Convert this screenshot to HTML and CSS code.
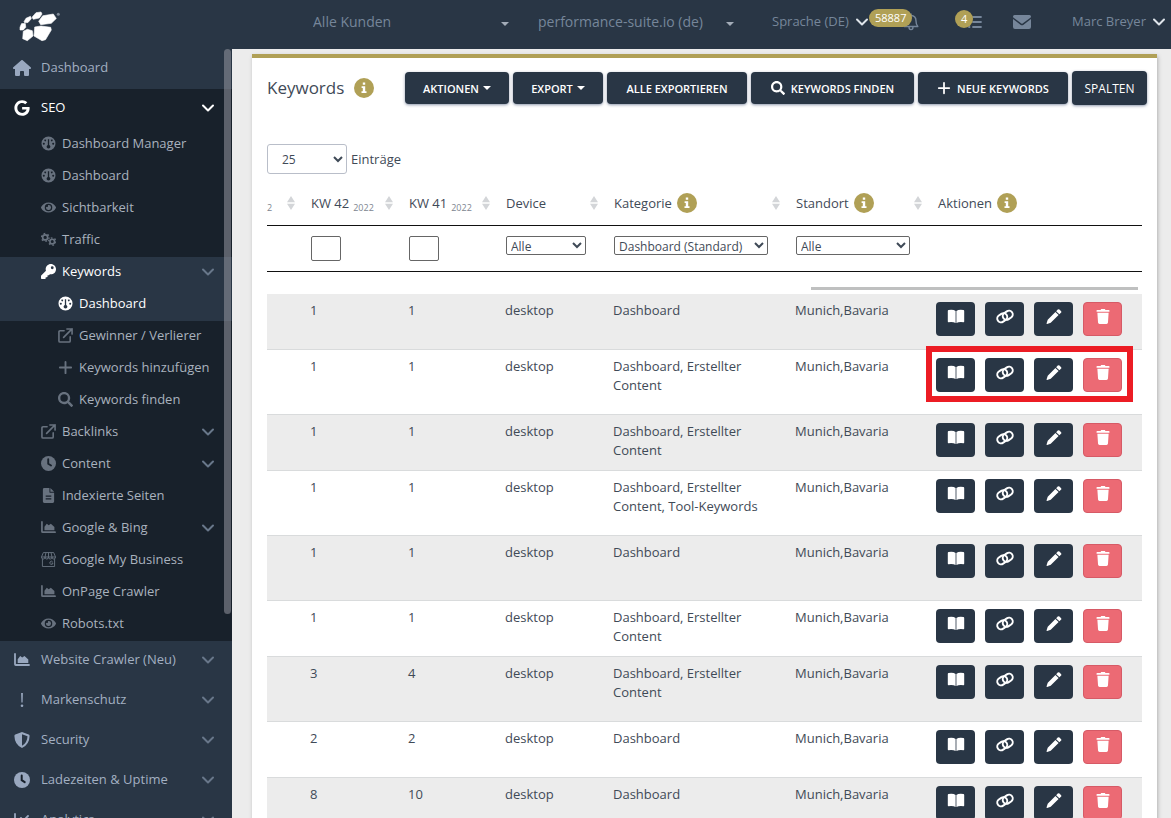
FILE: index.html
```html
<!DOCTYPE html>
<html lang="de">
<head>
<meta charset="utf-8">
<title>Keywords</title>
<meta name="viewport" content="width=device-width, initial-scale=1">
<link rel="stylesheet" href="styles.css">
</head>
<body>
<svg class="sprite" aria-hidden="true">
  <symbol id="home" viewBox="0 0 576 512"><path d="M575.8 255.5c0 18-15 32.1-32 32.1h-32l.7 160.2c0 2.7-.2 5.4-.5 8.1V472c0 22.1-17.9 40-40 40H392c-22.1 0-40-17.9-40-40V384c0-17.7-14.3-32-32-32H256c-17.7 0-32 14.3-32 32v88c0 22.1-17.9 40-40 40H104c-22.1 0-40-17.9-40-40V287.600H32c-18 0-32-14-32-32.100c0-9 3-17 10-24L266.400 8c7-7 15-8 22-8s15 2 21 7L564.800 231.500c8 7 12 15 11 24z"/></symbol>
  <symbol id="google" viewBox="0 0 488 512"><path d="M488 261.8C488 403.3 391.1 504 248 504 110.8 504 0 393.2 0 256S110.800 8 248 8c66.800 0 123 24.500 166.300 64.900l-67.500 64.900C258.500 52.600 94.300 116.600 94.300 256c0 86.500 69.100 156.600 153.700 156.600 98.200 0 135-70.400 140.800-106.900H248v-85.300h236.100c2.300 12.700 3.900 24.900 3.900 41.400z"/></symbol>
  <symbol id="gauge" viewBox="0 0 16 16"><path fill-rule="evenodd" d="M8 0.500a7.500 7.500 0 1 1 0 15a7.500 7.500 0 0 1 0-15zM7.300 3.500v6a2 2 0 1 0 1.400 0v-6zM4.500 3.600a1 1 0 1 0 .01 0zM11.500 3.600a1 1 0 1 0 .01 0zM3 7.200a1 1 0 1 0 .01 0zM13 7.200a1 1 0 1 0 .01 0z"/></symbol>
  <symbol id="eye" viewBox="0 0 576 512"><path d="M572.520 241.400C518.290 135.590 410.930 64 288 64S57.680 135.640 3.480 241.410a32.350 32.350 0 0 0 0 29.190C57.710 376.410 165.070 448 288 448s230.320-71.640 284.520-177.410a32.350 32.350 0 0 0 0-29.190zM288 400a144 144 0 1 1 144-144 143.930 143.930 0 0 1-144 144zm0-240a95.310 95.310 0 0 0-25.310 3.790 47.850 47.850 0 0 1-66.900 66.900A95.780 95.780 0 1 0 288 160z"/></symbol>
  <symbol id="gears" viewBox="1 1 18 14"><g fill="none" stroke="currentColor"><circle cx="6" cy="5.500" r="3" stroke-width="2"/><circle cx="6" cy="5.500" r="4.700" stroke-width="1.600" stroke-dasharray="2 2.920"/><circle cx="14.500" cy="10.500" r="2.800" stroke-width="2"/><circle cx="14.500" cy="10.500" r="4.400" stroke-width="1.600" stroke-dasharray="2 2.600"/></g></symbol>
  <symbol id="key" viewBox="0 0 512 512"><path d="M512 176C512 273.200 433.200 352 336 352c-11.200 0-22.200-1-32.800-3l-24 27A24 24 0 0 1 261.200 384H224v40c0 13.300-10.700 24-24 24h-40v40c0 13.300-10.700 24-24 24H24c-13.300 0-24-10.700-24-24v-78a24 24 0 0 1 7-17l161.800-161.800C163 213.800 160 195.300 160 176 160 78.800 238.800 0 336 0c97.500 0 176 78.500 176 176zM336 128a48 48 0 1 0 96 0 48 48 0 1 0-96 0z"/></symbol>
  <symbol id="external" viewBox="0 0 16 16"><path fill="none" stroke="currentColor" stroke-width="1.700" stroke-linecap="round" stroke-linejoin="round" d="M6.500 3H2.200Q1 3 1 4.200v9.600Q1 15 2.200 15h9.600Q13 15 13 13.800V9.500M9.500 1H15v5.500M15 1L6 10"/></symbol>
  <symbol id="plus" viewBox="0 0 16 16"><path fill="none" stroke="currentColor" stroke-width="2" stroke-linecap="round" d="M8 2v12M2 8h12"/></symbol>
  <symbol id="search" viewBox="0 0 512 512"><path d="M505 442.700L405.300 343c-4.500-4.500-10.600-7-17-7H372c27.600-35.300 44-79.700 44-128C416 93.100 322.900 0 208 0S0 93.100 0 208s93.100 208 208 208c48.300 0 92.700-16.400 128-44v16.300c0 6.400 2.500 12.500 7 17l99.700 99.700c9.400 9.400 24.600 9.400 33.900 0l28.300-28.300c9.400-9.400 9.400-24.600.1-34zM208 336a128 128 0 1 1 0-256 128 128 0 0 1 0 256z"/></symbol>
  <symbol id="clock" viewBox="0 0 16 16"><circle cx="8" cy="8" r="8"/><path class="cut" d="M7.700 3.500v4.700l3 2"/></symbol>
  <symbol id="file" viewBox="0 0 16 16"><path fill-rule="evenodd" d="M3.500 0H9v4.500q0 .5.500.5H14v9.500q0 1.500-1.500 1.500h-9Q2 16 2 14.500v-13Q2 0 3.500 0zM10 0l4 4h-4zM5 8v1.200h6V8zM5 11v1.200h6V11z"/></symbol>
  <symbol id="area" viewBox="0 0 16 16"><path fill="none" stroke="currentColor" stroke-width="1.800" stroke-linecap="round" stroke-linejoin="round" d="M1 2v10.200q0 .8.800.8H15"/><path d="M3.700 11V7.200L6.200 4l2 1.600L10.500 4l3.800 3.500V11z"/></symbol>
  <symbol id="line" viewBox="0 0 16 16"><path fill="none" stroke="currentColor" stroke-width="1.800" stroke-linecap="round" stroke-linejoin="round" d="M1 2v10.200q0 .8.800.8H15M4 9l3-3 2.500 2.500L14 4"/></symbol>
  <symbol id="store" viewBox="0 0 16 16"><g fill="none" stroke="currentColor"><path d="M2.500.6h11l2 4.700H.5zM5.300.6L4.300 5.300M8 .6v4.700M10.700.6l1 4.700M.5 5.300q0 2.200 1.900 2.200t1.900-2.200q0 2.200 1.850 2.200T8 5.300q0 2.200 1.850 2.200t1.850-2.200q0 2.200 1.900 2.200t1.900-2.200M1.500 7.500v8h13v-8"/><path d="M12.300 10.300a1.700 1.700 0 1 0 .5 1.500h-1.500"/></g></symbol>
  <symbol id="bang" viewBox="0 0 16 16"><path d="M7.100 1h1.800l-.3 9.500H7.400z"/><circle cx="8" cy="13.800" r="1.300"/></symbol>
  <symbol id="shield" viewBox="0 0 16 16"><path fill-rule="evenodd" d="M8 0l6.700 2.600q.9.400.9 1.300Q15.400 12.400 8 16Q.6 12.400.4 3.900.4 3 1.300 2.600zM8 2.200v11.600q5.300-2.900 5.500-9.500z"/></symbol>
  <symbol id="chevron" viewBox="0 0 16 16"><path fill="none" stroke="currentColor" stroke-width="2" stroke-linecap="round" stroke-linejoin="round" d="M3 5.500l5 5 5-5"/></symbol>
  <symbol id="caret" viewBox="0 0 8 4"><path d="M0 0h8L4 4z"/></symbol>
  <symbol id="bell" viewBox="0 0 16 18"><path fill="none" stroke="currentColor" stroke-width="1.400" stroke-linecap="round" stroke-linejoin="round" d="M8 1v1.500M1.200 13.500q1.800-2 1.800-5.500 0-5.300 5-5.500 5 .2 5 5.500 0 3.500 1.800 5.500zM6 14q0 2.600 2 2.600t2-2.600"/></symbol>
  <symbol id="tasks" viewBox="0 0 16 16"><path fill="none" stroke="currentColor" stroke-width="1.800" stroke-linecap="round" d="M7 3h8M7 8h8M3 13h.5M7 13h8M1 3l1 1 2-2M1 8l1 1 2-2"/></symbol>
  <symbol id="mail" viewBox="0 0 18 14"><path d="M1.500 0h15Q18 0 18 1.500q0 .7-.6 1.200L9.600 8.600q-.6.400-1.200 0L.6 2.700Q0 2.200 0 1.500 0 0 1.500 0zM0 4l7.800 5.900q1.200.8 2.400 0L18 4v8q0 2-2 2H2q-2 0-2-2z"/></symbol>
  <symbol id="info" viewBox="0 0 20 20"><circle cx="10" cy="10" r="10"/><path fill="#fff" d="M8.800 4.600h2.400v2.200H8.800zM7.600 8.200h3.600v5h1.300v1.700h-5v-1.700h1.300V9.900H7.600z"/></symbol>
  <symbol id="sort" viewBox="0 0 8 14"><path d="M4 0l4 6.300H0zM0 7.700h8L4 14z"/></symbol>
  <symbol id="book" viewBox="0 0 18 15"><path d="M8.600 2v12Q6 12.600 1.600 13.200q-.8.100-.8-.7V2q0-.9.800-1Q6.500.3 8.600 2zM9.400 2v12q2.600-1.400 7-.8.800.1.800-.7V2q0-.9-.8-1-4.900-.7-7 1z"/></symbol>
  <symbol id="link" viewBox="0 0 18 15"><g fill="none" stroke="currentColor" stroke-width="2"><rect x="1" y="5" width="10.500" height="7.500" rx="3.750" transform="rotate(-35 6.250 8.750)"/><rect x="6.500" y="2.500" width="10.500" height="7.500" rx="3.750" transform="rotate(-35 11.750 6.250)"/></g></symbol>
  <symbol id="pencil" viewBox="0 0 16 16"><path d="M10.300 2.300l1.700-1.700q.9-.9 1.800 0l1.600 1.600q.9.900 0 1.800l-1.700 1.700zM9.500 3.100l3.400 3.400-8.400 8.200L.7 15.900q-.8.200-.6-.6l1.200-3.800z"/></symbol>
  <symbol id="trash" viewBox="0 0 14 16"><path d="M5 0h4l.6 1H13q1 0 1 1t-1 1H1Q0 3 0 2t1-1h3.400zM1 4h12l-.7 10.500Q12.200 16 10.700 16H3.300q-1.500 0-1.600-1.500z"/></symbol>
</svg>

<div class="app">
  <header class="topbar">
    <a class="logo" href="#" aria-label="Startseite">
      <svg viewBox="0 0 42 32" width="42" height="32">
        <g fill="#fff" stroke="#fff" stroke-width=".6" stroke-linejoin="round">
          <path d="M13 6.300L17 1.700 22 1 23 3 20.300 7 14.300 8.300z"/>
          <path d="M19.700 10.300L23.700 4.800 34.300 3 37.300 7.500 32.300 12.300 21.700 13.700z"/>
          <path d="M15.700 16L22 15 31.700 16.300 32.300 19 26.500 28.700 23 29.700 15 25z"/>
          <path d="M4.300 20.300L8.300 18.300 13.300 19.700 14 25 8.300 29.700 3.700 27.700z"/>
          <path d="M1 16.300L2.600 12.600 6.300 12.600 6.800 16.300 4.300 19 1 19z"/>
          <path d="M5 10.700L7 7.300 11.500 5.300 12.300 7.700 9 11.500 5.700 11.800z"/>
        </g>
        <circle cx="39.300" cy="3.300" r="1.500" fill="#7d8794"/>
      </svg>
    </a>
    <div class="tools">
      <div class="picker">
        <select aria-label="Kunde"><option>Alle Kunden</option></select>
        <svg class="caret"><use href="#caret"/></svg>
      </div>
      <div class="picker">
        <select aria-label="Projekt"><option>performance-suite.io (de)</option></select>
        <svg class="caret"><use href="#caret"/></svg>
      </div>
      <button class="tool language">Sprache (DE)<svg class="chev"><use href="#chevron"/></svg></button>
      <button class="tool bell" aria-label="Benachrichtigungen"><span class="badge">58887</span><svg><use href="#bell"/></svg></button>
      <button class="tool tasks" aria-label="Aufgaben"><span class="badge">4</span><svg><use href="#tasks"/></svg></button>
      <button class="tool mail" aria-label="Nachrichten"><svg><use href="#mail"/></svg></button>
      <button class="tool user">Marc Breyer<svg class="chev"><use href="#chevron"/></svg></button>
    </div>
  </header>

  <nav class="sidebar">
    <a class="item" href="#"><svg><use href="#home"/></svg>Dashboard</a>
    <div class="group">
      <a class="item active" href="#"><svg><use href="#google"/></svg>SEO<svg class="chev"><use href="#chevron"/></svg></a>
      <a class="sub" href="#"><svg><use href="#gauge"/></svg>Dashboard Manager</a>
      <a class="sub" href="#"><svg><use href="#gauge"/></svg>Dashboard</a>
      <a class="sub" href="#"><svg><use href="#eye"/></svg>Sichtbarkeit</a>
      <a class="sub" href="#"><svg><use href="#gears"/></svg>Traffic</a>
      <a class="sub current" href="#"><svg><use href="#key"/></svg>Keywords<svg class="chev"><use href="#chevron"/></svg></a>
      <a class="sub deep current" href="#"><svg><use href="#gauge"/></svg>Dashboard</a>
      <a class="sub deep" href="#"><svg><use href="#external"/></svg>Gewinner / Verlierer</a>
      <a class="sub deep" href="#"><svg><use href="#plus"/></svg>Keywords hinzufügen</a>
      <a class="sub deep" href="#"><svg><use href="#search"/></svg>Keywords finden</a>
      <a class="sub" href="#"><svg><use href="#external"/></svg>Backlinks<svg class="chev"><use href="#chevron"/></svg></a>
      <a class="sub" href="#"><svg><use href="#clock"/></svg>Content<svg class="chev"><use href="#chevron"/></svg></a>
      <a class="sub" href="#"><svg><use href="#file"/></svg>Indexierte Seiten</a>
      <a class="sub" href="#"><svg><use href="#area"/></svg>Google &amp; Bing<svg class="chev"><use href="#chevron"/></svg></a>
      <a class="sub" href="#"><svg><use href="#store"/></svg>Google My Business</a>
      <a class="sub" href="#"><svg><use href="#area"/></svg>OnPage Crawler</a>
      <a class="sub" href="#"><svg><use href="#eye"/></svg>Robots.txt</a>
    </div>
    <a class="item" href="#"><svg><use href="#area"/></svg>Website Crawler (Neu)<svg class="chev"><use href="#chevron"/></svg></a>
    <a class="item" href="#"><svg><use href="#bang"/></svg>Markenschutz<svg class="chev"><use href="#chevron"/></svg></a>
    <a class="item" href="#"><svg><use href="#shield"/></svg>Security<svg class="chev"><use href="#chevron"/></svg></a>
    <a class="item" href="#"><svg><use href="#clock"/></svg>Ladezeiten &amp; Uptime<svg class="chev"><use href="#chevron"/></svg></a>
    <a class="item" href="#"><svg><use href="#line"/></svg>Analytics<svg class="chev"><use href="#chevron"/></svg></a>
    <div class="thumb"></div>
  </nav>

  <main class="main">
    <section class="card">
      <div class="head">
        <h1>Keywords</h1><svg class="info"><use href="#info"/></svg>
        <div class="actions">
          <button class="btn w-aktionen">AKTIONEN<svg class="caret"><use href="#caret"/></svg></button>
          <button class="btn w-export">EXPORT<svg class="caret"><use href="#caret"/></svg></button>
          <button class="btn w-alle">ALLE EXPORTIEREN</button>
          <button class="btn w-finden"><svg class="lead"><use href="#search"/></svg>KEYWORDS FINDEN</button>
          <button class="btn w-neue"><svg class="lead"><use href="#plus"/></svg>NEUE KEYWORDS</button>
          <button class="btn w-spalten">SPALTEN</button>
        </div>
      </div>
      <div class="length">
        <select id="length"><option>25</option></select>
        <label for="length">Einträge</label>
      </div>

      <table class="grid grid-head">
        <colgroup><col class="c0"><col class="c1"><col class="c2"><col class="c3"><col class="c4"><col class="c5"><col></colgroup>
        <thead>
          <tr class="titles">
            <th><div class="th"><span class="year">2</span><svg class="sort"><use href="#sort"/></svg></div></th>
            <th><div class="th">KW 42<span class="year">2022</span><svg class="sort"><use href="#sort"/></svg></div></th>
            <th><div class="th">KW 41<span class="year">2022</span><svg class="sort"><use href="#sort"/></svg></div></th>
            <th><div class="th">Device<svg class="sort"><use href="#sort"/></svg></div></th>
            <th><div class="th">Kategorie<svg class="info"><use href="#info"/></svg><svg class="sort"><use href="#sort"/></svg></div></th>
            <th><div class="th">Standort<svg class="info"><use href="#info"/></svg><svg class="sort"><use href="#sort"/></svg></div></th>
            <th><div class="th">Aktionen<svg class="info"><use href="#info"/></svg></div></th>
          </tr>
          <tr class="filters">
            <td></td>
            <td><input type="text" aria-label="KW 42 filtern"></td>
            <td><input type="text" aria-label="KW 41 filtern"></td>
            <td><select class="f-device" aria-label="Device filtern"><option>Alle</option></select></td>
            <td><select class="f-category" aria-label="Kategorie filtern"><option>Dashboard (Standard)</option></select></td>
            <td><select class="f-place" aria-label="Standort filtern"><option>Alle</option></select></td>
            <td></td>
          </tr>
        </thead>
      </table>
      <div class="scroll"><div class="bar"></div></div>
      <table class="grid grid-body">
        <colgroup><col class="c0"><col class="c1"><col class="c2"><col class="c3"><col class="c4"><col class="c5"><col></colgroup>
        <tbody>
          <tr><td></td><td>1</td><td>1</td><td>desktop</td><td>Dashboard</td><td>Munich,Bavaria</td><td><div class="ops"><button class="op" aria-label="Details"><svg><use href="#book"/></svg></button><button class="op" aria-label="Verlinken"><svg><use href="#link"/></svg></button><button class="op" aria-label="Bearbeiten"><svg><use href="#pencil"/></svg></button><button class="op danger" aria-label="Löschen"><svg><use href="#trash"/></svg></button></div></td></tr>
          <tr class="tall"><td></td><td>1</td><td>1</td><td>desktop</td><td>Dashboard, Erstellter Content</td><td>Munich,Bavaria</td><td><div class="ops marked"><button class="op" aria-label="Details"><svg><use href="#book"/></svg></button><button class="op" aria-label="Verlinken"><svg><use href="#link"/></svg></button><button class="op" aria-label="Bearbeiten"><svg><use href="#pencil"/></svg></button><button class="op danger" aria-label="Löschen"><svg><use href="#trash"/></svg></button></div></td></tr>
          <tr><td></td><td>1</td><td>1</td><td>desktop</td><td>Dashboard, Erstellter Content</td><td>Munich,Bavaria</td><td><div class="ops"><button class="op" aria-label="Details"><svg><use href="#book"/></svg></button><button class="op" aria-label="Verlinken"><svg><use href="#link"/></svg></button><button class="op" aria-label="Bearbeiten"><svg><use href="#pencil"/></svg></button><button class="op danger" aria-label="Löschen"><svg><use href="#trash"/></svg></button></div></td></tr>
          <tr class="tall"><td></td><td>1</td><td>1</td><td>desktop</td><td>Dashboard, Erstellter Content, Tool-Keywords</td><td>Munich,Bavaria</td><td><div class="ops"><button class="op" aria-label="Details"><svg><use href="#book"/></svg></button><button class="op" aria-label="Verlinken"><svg><use href="#link"/></svg></button><button class="op" aria-label="Bearbeiten"><svg><use href="#pencil"/></svg></button><button class="op danger" aria-label="Löschen"><svg><use href="#trash"/></svg></button></div></td></tr>
          <tr class="tall"><td></td><td>1</td><td>1</td><td>desktop</td><td>Dashboard</td><td>Munich,Bavaria</td><td><div class="ops"><button class="op" aria-label="Details"><svg><use href="#book"/></svg></button><button class="op" aria-label="Verlinken"><svg><use href="#link"/></svg></button><button class="op" aria-label="Bearbeiten"><svg><use href="#pencil"/></svg></button><button class="op danger" aria-label="Löschen"><svg><use href="#trash"/></svg></button></div></td></tr>
          <tr><td></td><td>1</td><td>1</td><td>desktop</td><td>Dashboard, Erstellter Content</td><td>Munich,Bavaria</td><td><div class="ops"><button class="op" aria-label="Details"><svg><use href="#book"/></svg></button><button class="op" aria-label="Verlinken"><svg><use href="#link"/></svg></button><button class="op" aria-label="Bearbeiten"><svg><use href="#pencil"/></svg></button><button class="op danger" aria-label="Löschen"><svg><use href="#trash"/></svg></button></div></td></tr>
          <tr class="tall"><td></td><td>3</td><td>4</td><td>desktop</td><td>Dashboard, Erstellter Content</td><td>Munich,Bavaria</td><td><div class="ops"><button class="op" aria-label="Details"><svg><use href="#book"/></svg></button><button class="op" aria-label="Verlinken"><svg><use href="#link"/></svg></button><button class="op" aria-label="Bearbeiten"><svg><use href="#pencil"/></svg></button><button class="op danger" aria-label="Löschen"><svg><use href="#trash"/></svg></button></div></td></tr>
          <tr><td></td><td>2</td><td>2</td><td>desktop</td><td>Dashboard</td><td>Munich,Bavaria</td><td><div class="ops"><button class="op" aria-label="Details"><svg><use href="#book"/></svg></button><button class="op" aria-label="Verlinken"><svg><use href="#link"/></svg></button><button class="op" aria-label="Bearbeiten"><svg><use href="#pencil"/></svg></button><button class="op danger" aria-label="Löschen"><svg><use href="#trash"/></svg></button></div></td></tr>
          <tr><td></td><td>8</td><td>10</td><td>desktop</td><td>Dashboard</td><td>Munich,Bavaria</td><td><div class="ops"><button class="op" aria-label="Details"><svg><use href="#book"/></svg></button><button class="op" aria-label="Verlinken"><svg><use href="#link"/></svg></button><button class="op" aria-label="Bearbeiten"><svg><use href="#pencil"/></svg></button><button class="op danger" aria-label="Löschen"><svg><use href="#trash"/></svg></button></div></td></tr>
        </tbody>
      </table>
    </section>
  </main>
</div>
</body>
</html>
```

FILE: styles.css
```css
:root {
  --navy: #293645;
  --dark: #18212b;
  --gold: #b0a056;
  --muted: #76869a;
}

* { box-sizing: border-box; }

body {
  margin: 0;
  font: 13px/19px "Open Sans", "Noto Sans", sans-serif;
  color: #3f4a57;
  background: #ececec;
}

button, select, input { font: inherit; color: inherit; }
button { border: 0; padding: 0; cursor: pointer; }
svg { fill: currentColor; flex: none; }
.sprite { position: absolute; width: 0; height: 0; }

.app {
  display: grid;
  grid-template: 49px minmax(0, 1fr) / 232px minmax(0, 1fr);
  height: 100vh;
  overflow: hidden;
}

/* Top bar */
.topbar {
  grid-column: 1 / -1;
  display: grid;
  grid-template-columns: 232px minmax(0, 1fr);
  background: var(--navy);
  color: var(--muted);
}
.logo { padding: 11px 0 0 19px; }
.tools { display: flex; align-items: center; padding: 0 4px 6px 81px; }
.picker { position: relative; width: 196px; margin-right: 29px; font-size: 14px; }
.picker select {
  display: block;
  width: 100%;
  appearance: none;
  border: 0;
  padding: 0;
  background: none;
}
.picker .caret { position: absolute; right: 0; top: 10px; color: #a3acb8; }
.caret { width: 8px; height: 4px; }
.chev { width: 16px; height: 16px; }
.tool { display: flex; align-items: center; background: none; white-space: nowrap; }
.tool .chev { color: #dfe4ea; }
.language { width: 98px; justify-content: space-between; margin-left: 9px; }
.bell { position: relative; width: 49px; justify-content: flex-end; }
.bell svg { width: 16px; height: 18px; }
.tasks { position: relative; justify-content: flex-end; width: 26px; margin-left: auto; }
.tasks svg { width: 16px; height: 16px; }
.badge {
  position: absolute;
  left: -1px;
  top: -4px;
  height: 18px;
  padding: 0 6px;
  border-radius: 9px;
  background: var(--gold);
  color: #fff;
  font-size: 11px;
  line-height: 18px;
}
.mail { margin-left: 31px; }
.mail svg { width: 18px; height: 14px; }
.user { width: 95px; justify-content: space-between; margin-left: 41px; }

/* Sidebar */
.sidebar {
  position: relative;
  overflow: hidden;
  background: var(--navy);
  color: #a3b0c2;
}
.sidebar a {
  display: flex;
  align-items: center;
  color: inherit;
  text-decoration: none;
  white-space: nowrap;
}
.item { height: 40px; padding: 0 16px 3px 13px; gap: 10px; }
.item svg { width: 18px; height: 16px; }
.item svg:first-child { color: #99a8bf; }
.sidebar .chev { width: 16px; height: 16px; margin-left: auto; color: #68778a; }
.group { background: var(--dark); color: #a9b2be; }
.sub { height: 32px; padding: 0 16px 3px 41px; gap: 6px; }
.sub svg { width: 15px; height: 15px; }
.sub svg:first-child { color: #68727f; }
.deep { padding-left: 58px; }
.sidebar .active, .sidebar .current, .sidebar .active svg, .sidebar .current svg:first-child { color: #fff; }
.current { background: var(--navy); }
.cut { fill: none; stroke: var(--dark); stroke-width: 2; stroke-linecap: round; }
.thumb {
  position: absolute;
  top: 0;
  right: 1px;
  width: 7px;
  height: 565px;
  border-radius: 4px;
  background: rgb(150 152 160 / 55%);
}

/* Content card */
.main { padding: 5px 14px 0 20px; overflow: hidden; }
.card {
  min-height: 100%;
  padding: 0 15px;
  border-top: 4px solid var(--gold);
  background: #fff;
  box-shadow: 1px 2px 4px rgb(0 0 0 / 25%);
}
.head { display: flex; align-items: center; height: 60px; margin-right: -5px; }
h1 { margin: 0 10px 0 0; font-size: 17px; font-weight: 400; line-height: 24px; }
.info { width: 20px; height: 20px; color: var(--gold); }
.actions { display: flex; align-items: center; gap: 4px; margin-left: auto; }
.btn {
  display: flex;
  align-items: center;
  justify-content: center;
  height: 32px;
  border-radius: 4px;
  background: var(--navy);
  box-shadow: 0 1px 3px rgb(30 50 90 / 50%);
  color: #fff;
  font-size: 11px;
  font-weight: 600;
  white-space: nowrap;
}
.btn .caret { margin-left: 4px; }
.lead { width: 14px; height: 14px; margin-right: 6px; }
.w-aktionen { width: 104px; }
.w-export { width: 90px; }
.w-alle { width: 140px; }
.w-finden { width: 163px; }
.w-neue { width: 150px; }
.w-spalten { width: 75px; height: 34px; font-size: 12px; font-weight: 500; }

.length { display: flex; align-items: center; gap: 4px; margin-top: 26px; }
.length select {
  width: 80px;
  height: 30px;
  padding: 0 5px 0 10px;
  border: 1px solid #b9bec9;
  border-radius: 3px;
  background: #fff;
  font-size: 12px;
}

/* Keyword table */
.grid { width: 100%; table-layout: fixed; border-collapse: collapse; }
.c0 { width: 34px; }
.c1 { width: 98px; }
.c2 { width: 97px; }
.c3 { width: 108px; }
.c4 { width: 182px; }
.c5 { width: 142px; }
.grid-head { margin-top: 8px; }
.grid-head th { height: 43px; padding: 0 6px 0 10px; font-weight: 400; text-align: left; }
.grid-head th:first-child { padding-left: 0; }
.grid-head tr { border-bottom: 1px solid #111; }
.th { display: flex; align-items: center; white-space: nowrap; }
.th .info { margin-left: 5px; }
.year { margin: 8px 0 0 4px; font-size: 9px; line-height: 11px; color: #7d858f; }
th:first-child .year { margin-left: 0; }
.sort { width: 8px; height: 14px; margin-left: auto; color: #d3d5d8; }
.filters td { height: 46px; padding: 10px 0 0 10px; vertical-align: top; }
.filters input { display: block; width: 30px; height: 25px; border: 1px solid #666; border-radius: 2px; }
.filters select { display: block; height: 19px; padding: 0; border: 1px solid #666; border-radius: 2px; background: #fff; font-size: 12px; line-height: normal; }
.f-device { width: 80px; }
.f-category { width: 154px; }
.f-place { width: 114px; }

.scroll { display: flex; justify-content: flex-end; padding: 15px 4px 4px 0; }
.bar { width: 327px; height: 3px; background: #bfc0c0; }

.grid-body tr { height: 56px; border-bottom: 1px solid #d9dbdc; }
.grid-body .tall { height: 65px; }
.grid-body tr:nth-child(odd) { background: #ececec; }
.grid-body td { padding: 7px 20px 0 9px; vertical-align: top; }
.grid-body td:nth-child(n + 6) { padding-right: 0; }
.grid-body td:last-child { padding: 8px 0 0 8px; }
.ops { position: relative; display: flex; gap: 10px; width: max-content; }
.op {
  display: flex;
  justify-content: center;
  width: 39px;
  height: 34px;
  padding-top: 7px;
  border-radius: 4px;
  background: var(--navy);
  color: #fff;
}
.op svg { width: 18px; height: 15px; }
.danger { border: 1px solid #d65a66; padding-top: 6px; background: #ec6a74; }
.marked::after {
  content: "";
  position: absolute;
  inset: -12px -11px -10px -10px;
  border: 6px solid #ec1c24;
  pointer-events: none;
}
```
